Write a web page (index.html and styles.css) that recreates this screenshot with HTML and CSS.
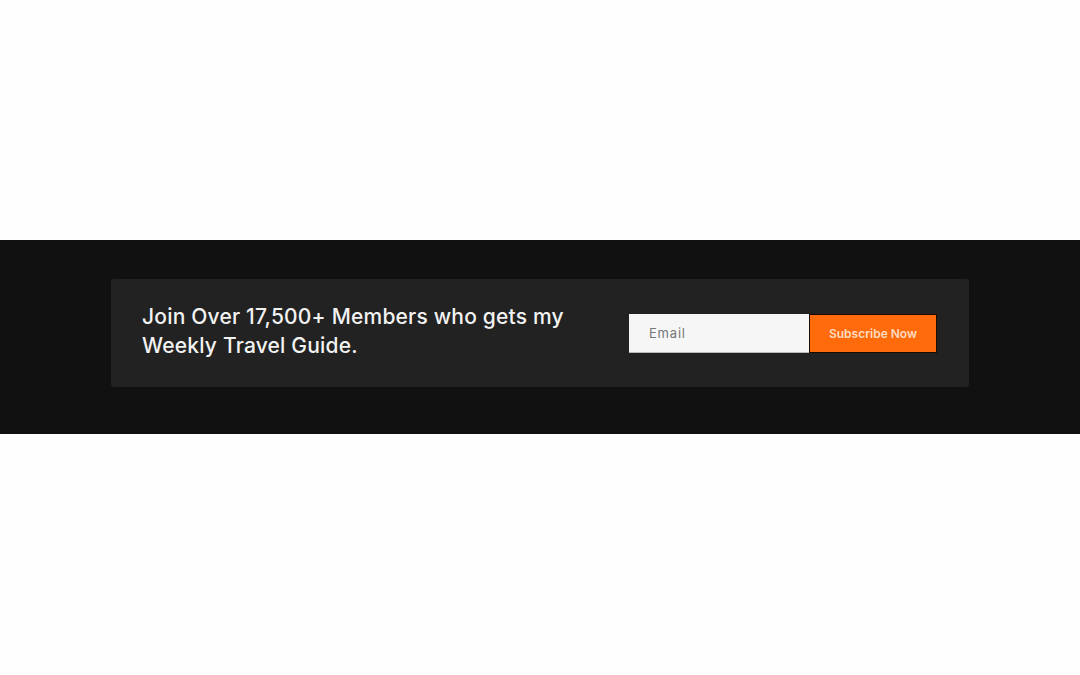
FILE: index.html
```html
<!DOCTYPE html>
<html lang="en">
<head>
  <meta charset="UTF-8">
  <title>Weekly Travel Guide</title>
  <link rel="stylesheet" href="styles.css">
</head>
<body>

<div class="top-space"></div>

<section class="newsletter">
  <div class="card">
    <h2>Join Over 17,500+ Members who gets my<br>Weekly Travel Guide.</h2>
    <form class="signup" onsubmit="return false">
      <input type="email" placeholder="Email">
      <button type="submit">Subscribe Now</button>
    </form>
  </div>
</section>

</body>
</html>
```

FILE: styles.css
```css
body {
  font-family: Inter, "Liberation Sans", sans-serif;
  background: #fefefe;
  margin: 0;
}
.top-space {
  height: 240px;
}
.newsletter {
  background: #111111;
  padding: 39px 111px 47px;
}
.card {
  background: #222222;
  border-radius: 3px;
  padding: 23px 32px 27px 31px;
  display: flex;
  align-items: center;
  justify-content: space-between;
}
h2 {
  margin: 0;
  color: #f2f2f2;
  font-size: 21px;
  font-weight: 500;
  line-height: 29px;
  letter-spacing: 0.2px;
}
.signup {
  display: flex;
  height: 39px;
  margin-top: 4px;
}
input {
  width: 180px;
  box-sizing: border-box;
  border: none;
  border-bottom: 1px solid #bbb;
  background: #f6f6f6;
  padding: 0 20px;
  font-family: Inter, sans-serif;
  font-size: 13px;
  letter-spacing: 0.8px;
  outline: none;
}
input::placeholder {
  color: #777;
}
button {
  width: 128px;
  background: #ff6b0a;
  color: #ffdcc2;
  border: 1px solid #1a0a00;
  font-family: Inter, sans-serif;
  font-size: 12px;
  font-weight: 600;
  cursor: pointer;
}
```
